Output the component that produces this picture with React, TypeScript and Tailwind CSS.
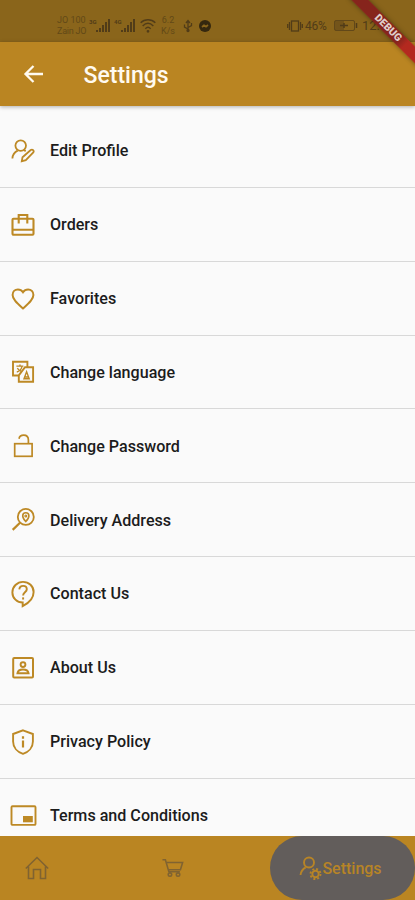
import type { ReactNode } from 'react';

const Icon = ({ children, className = 'w-6 h-6', width = 1.8 }: { children: ReactNode; className?: string; width?: number }) => (
    <svg
        viewBox="0 0 24 24"
        fill="none"
        stroke="currentColor"
        strokeWidth={width}
        className={`shrink-0 ${className}`}
    >
        {children}
    </svg>
);

const menuItems = [
    {
        label: 'Edit Profile',
        icon: (
            <Icon width={1.8}>
                <circle cx="9.7" cy="6.6" r="5.3" />
                <path d="M1.4 19.5c.2-4 2.4-6.5 5.3-7.9M12.8 11l1.9 1.1" />
                <path d="M10.8 22.2l.7-4 8.2-7.2c1.8-1.2 3.8.8 2.6 2.5l-7.5 7.7z" />
            </Icon>
        ),
    },
    {
        label: 'Orders',
        icon: (
            <Icon width={2.1}>
                <rect x="1.5" y="5.8" width="21" height="16" rx="1" />
                <path d="M1.5 16.8h21M7.7 10.5V2h8.6v8.5" />
            </Icon>
        ),
    },
    {
        label: 'Favorites',
        icon: (
            <Icon width={2}>
                <path d="M12 21.4C7 17 1.6 12.8 1.6 8c0-3.2 2.3-5.5 5.3-5.5 2 0 3.9 1 5.1 2.8 1.2-1.8 3.1-2.8 5.1-2.8 3 0 5.3 2.3 5.3 5.5 0 4.8-5.4 9-10.4 13.4z" />
            </Icon>
        ),
    },
    {
        label: 'Change language',
        icon: (
            <Icon width={1.9}>
                <path d="M8 15.5H2V1.7h14.4v5.3M14 7.2h8.1v14.6H7.8v-6.4z" />
                <path d="M5.4 6.2h7M9 4.6v1.6M11 6.6c-.8 3-2.6 4.8-5.2 5.4M6.3 8.1c1 1.5 2.5 2.6 4 3.4" strokeWidth="1.3" />
                <path d="M13 18.8l2.6-7 2.6 7zM14 17h3.3" strokeWidth="1.4" />
            </Icon>
        ),
    },
    {
        label: 'Change Password',
        icon: (
            <Icon width={1.7}>
                <rect x="3.7" y="9.7" width="17.4" height="12.6" />
                <path d="M17.4 9.7V6c0-2.9-2-4.8-4.7-4.8-2.5 0-4.2 1.2-4.7 3.5" />
            </Icon>
        ),
    },
    {
        label: 'Delivery Address',
        icon: (
            <Icon width={1.8}>
                <circle cx="14.8" cy="8.9" r="8" />
                <path d="M9 14.7l-7.3 7.2" strokeWidth="2.2" />
                <path d="M14.8 13.5c-2-2.2-3.1-3.8-3.1-5.6a3.1 3.1 0 0 1 6.2 0c0 1.8-1.1 3.4-3.1 5.6z" strokeWidth="1.6" />
                <circle cx="14.8" cy="7.9" r=".6" />
            </Icon>
        ),
    },
    {
        label: 'Contact Us',
        icon: (
            <Icon className="w-[26px] h-[26px] -mx-px overflow-visible" width={1.8}>
                <path d="M11.7 23.2v-3.3C6.5 19.9 2.2 15.8 2.2 10.5S6.500.8 12 .8s9.8 4.1 9.8 9.4c0 5.5-4 10-10.1 13z" />
                <path d="M8.6 7.7c.2-2 1.5-3.2 3.5-3.2s3.4 1.3 3.4 3.1c0 2.700-3.4 3-3.4 5.700" />
                <path d="M12.1 15.1v2" />
            </Icon>
        ),
    },
    {
        label: 'About Us',
        icon: (
            <Icon width={2}>
                <rect x="2.2" y="2" width="19.8" height="19.6" rx="1" />
                <circle cx="12" cy="8.6" r="2.4" strokeWidth="1.9" />
                <path d="M6.5 17.2c.4-2.4 3-3.6 5.5-3.6s5.1 1.2 5.5 3.6z" strokeWidth="2" />
            </Icon>
        ),
    },
    {
        label: 'Privacy Policy',
        icon: (
            <Icon className="w-6 h-6 overflow-visible" width={1.9}>
                <path d="M12 .3l9.9 3.7v7.4c0 6-4.2 10.6-9.9 12.4-5.7-1.8-9.9-6.4-9.9-12.4V4z" />
                <path d="M12 6.3v2.4M12 10.5v7" strokeWidth="2.2" />
            </Icon>
        ),
    },
    {
        label: 'Terms and Conditions',
        icon: (
            <Icon className="w-6 h-6 overflow-visible" width={1.9}>
                <rect x="0.5" y="2.3" width="24" height="18.6" rx="1" />
                <rect x="12" y="12" width="9.8" height="6.3" fill="currentColor" stroke="none" />
            </Icon>
        ),
    },
];

const SignalBars = ({ label }: { label: string }) => (
    <svg viewBox="0 0 22 14" fill="currentColor" className="w-[22px] h-3.5">
        <text x="0" y="5" fontSize="6" fontWeight="700">{label}</text>
        <path d="M7 11h2v2H7zM10 9h2v4h-2zM13 6h2v7h-2zM16 3h2v10h-2zM19 0h2v13h-2z" />
    </svg>
);

const StatusBar = () => (
    <div className="h-[42px] shrink-0 bg-[#8a651b] flex items-start pt-[15px] pl-[57px] text-[#513c18]">
        <div className="w-[30px] text-[9px] leading-[11px] whitespace-nowrap text-[#624917]">
            <div>JO 100</div>
            <div className="tracking-tight">Zain JO</div>
        </div>
        <div className="flex gap-[3px] pt-1 ml-0.5">
            <SignalBars label="3G" />
            <SignalBars label="4G" />
        </div>
        <Icon className="w-4 h-4 mt-[3px] ml-1" width={2.2}>
            <path d="M1 7c6-6 16-6 22 0M4 12c5-5 11-5 16 0M8 16c3-3 5-3 8 0" />
            <circle cx="12" cy="20" r="1" />
        </Icon>
        <div className="w-4 ml-1 text-[9px] leading-[11px] text-center text-[#624917]">
            <div>6.2</div>
            <div>K/s</div>
        </div>
        <Icon className="w-3 h-3.5 mt-1 ml-1.5" width={2.6}>
            <path d="M12 23V2M8 6l4-5 4 5M12 18l-7-4V9M12 15l7-4V6" />
            <circle cx="12" cy="21" r="2" fill="currentColor" />
        </Icon>
        <svg viewBox="0 0 12 12" className="w-3 h-3 mt-[5px] ml-[5px] text-[#35280f]">
            <circle cx="6" cy="6" r="6" fill="currentColor" />
            <path d="M3 7l2-1.6 2 1.2 2-1.6" stroke="#8a651b" strokeWidth="1.8" fill="none" />
        </svg>
        <svg viewBox="0 0 16 12" fill="none" stroke="currentColor" strokeWidth="1.3" className="w-4 h-3 mt-[5px] ml-[76px]">
            <rect x="4.5" y="1" width="7" height="10" />
            <path d="M2.5 2v8M.7 4v4M13.5 2v8M15.3 4v4" />
        </svg>
        <span className="w-[26px] text-[12px] leading-[22px] tracking-tight ml-0.5">46%</span>
        <svg viewBox="0 0 24 11" fill="none" stroke="currentColor" className="w-6 h-[11px] mt-[5px] ml-[3px]">
            <rect x=".5" y=".5" width="20" height="10" rx="1.5" opacity=".7" />
            <path d="M1 1h9v9H1z" fill="currentColor" stroke="none" opacity=".4" />
            <path d="M6 5.5h8M10 3v5M22.5 3v5" strokeWidth="1.5" />
        </svg>
        <span className="text-[13px] leading-[22px] ml-1">12:</span>
    </div>
);

const DebugBanner = () => (
    <div className="absolute top-0 right-0 w-[70px] h-[70px] overflow-hidden">
        <div className="absolute top-[22px] left-[-7px] w-[100px] h-3 rotate-45 flex items-center justify-center bg-linear-to-r from-[#86241c] from-66% to-[#b3291f] to-74% shadow-[0_0_5px_rgba(0,0,0,0.4)] text-[#e0cdca] text-[10.5px] leading-none font-black">
            DEBUG
        </div>
    </div>
);

export default function App() {
    return (
        <div className="relative h-[900px] flex flex-col overflow-hidden bg-[#fafafa] font-['Roboto',sans-serif]">
            <StatusBar />
            <header className="h-16 shrink-0 z-10 flex items-center bg-[#ba8522] text-[#fffaf0] shadow-[0_1px_4px_rgba(0,0,0,0.3)]">
                <svg viewBox="0 0 20 18" fill="none" stroke="currentColor" strokeWidth="2.3" className="w-5 h-[18px] ml-[23px]">
                    <path d="M20 9H2.5M10.5 1L2.5 9l8 8" />
                </svg>
                <h1 className="ml-[40.5px] pt-1 text-[23px] font-medium">Settings</h1>
            </header>
            <div className="z-20">
                <DebugBanner />
            </div>

            <main className="flex-1 min-h-0 overflow-hidden pt-2">
                {menuItems.map((item) => (
                    <div
                        key={item.label}
                        className="h-[73.85px] flex items-center gap-[15px] pt-px pl-[11px] border-b-[1.5px] border-[#d8d8d8] text-[#bd8925]"
                    >
                        {item.icon}
                        <span className="pt-px text-[16.1px] font-medium text-[#1c1c1c]">{item.label}</span>
                    </div>
                ))}
            </main>

            <nav className="h-16 shrink-0 flex items-center bg-[#ba8522] text-[#806331]">
                <Icon className="w-6 h-6 ml-[25px]" width={1.6}>
                    <path d="M.8 12.5L12 1.5l11.2 11M3.5 10.5v12h5v-9h7v9h5v-12" />
                </Icon>
                <Icon className="w-[22px] h-[22px] ml-[113px]" width={1.7}>
                    <path d="M.5 3h3.2l3.8 13h12M4.8 6h17.7l-2.4 8H7.2" />
                    <circle cx="8.7" cy="19.2" r="1.9" />
                    <circle cx="17.5" cy="19.2" r="1.9" />
                </Icon>
                <button className="w-[145px] h-16 ml-auto pr-1 rounded-full flex items-center justify-center bg-[#625d5b] text-[#b78427]">
                    <Icon className="w-6 h-6" width={1.9}>
                        <circle cx="10" cy="6.5" r="5" />
                        <path d="M1.5 19c.4-3.5 2.3-6 5.2-7.6" />
                        <circle cx="16.5" cy="18" r="3.2" />
                        <circle cx="16.5" cy="18" r="5" strokeDasharray="2 1.93" />
                    </Icon>
                    <span className="pt-0.5 -ml-px text-[16px] font-medium">Settings</span>
                </button>
            </nav>
        </div>
    );
}
